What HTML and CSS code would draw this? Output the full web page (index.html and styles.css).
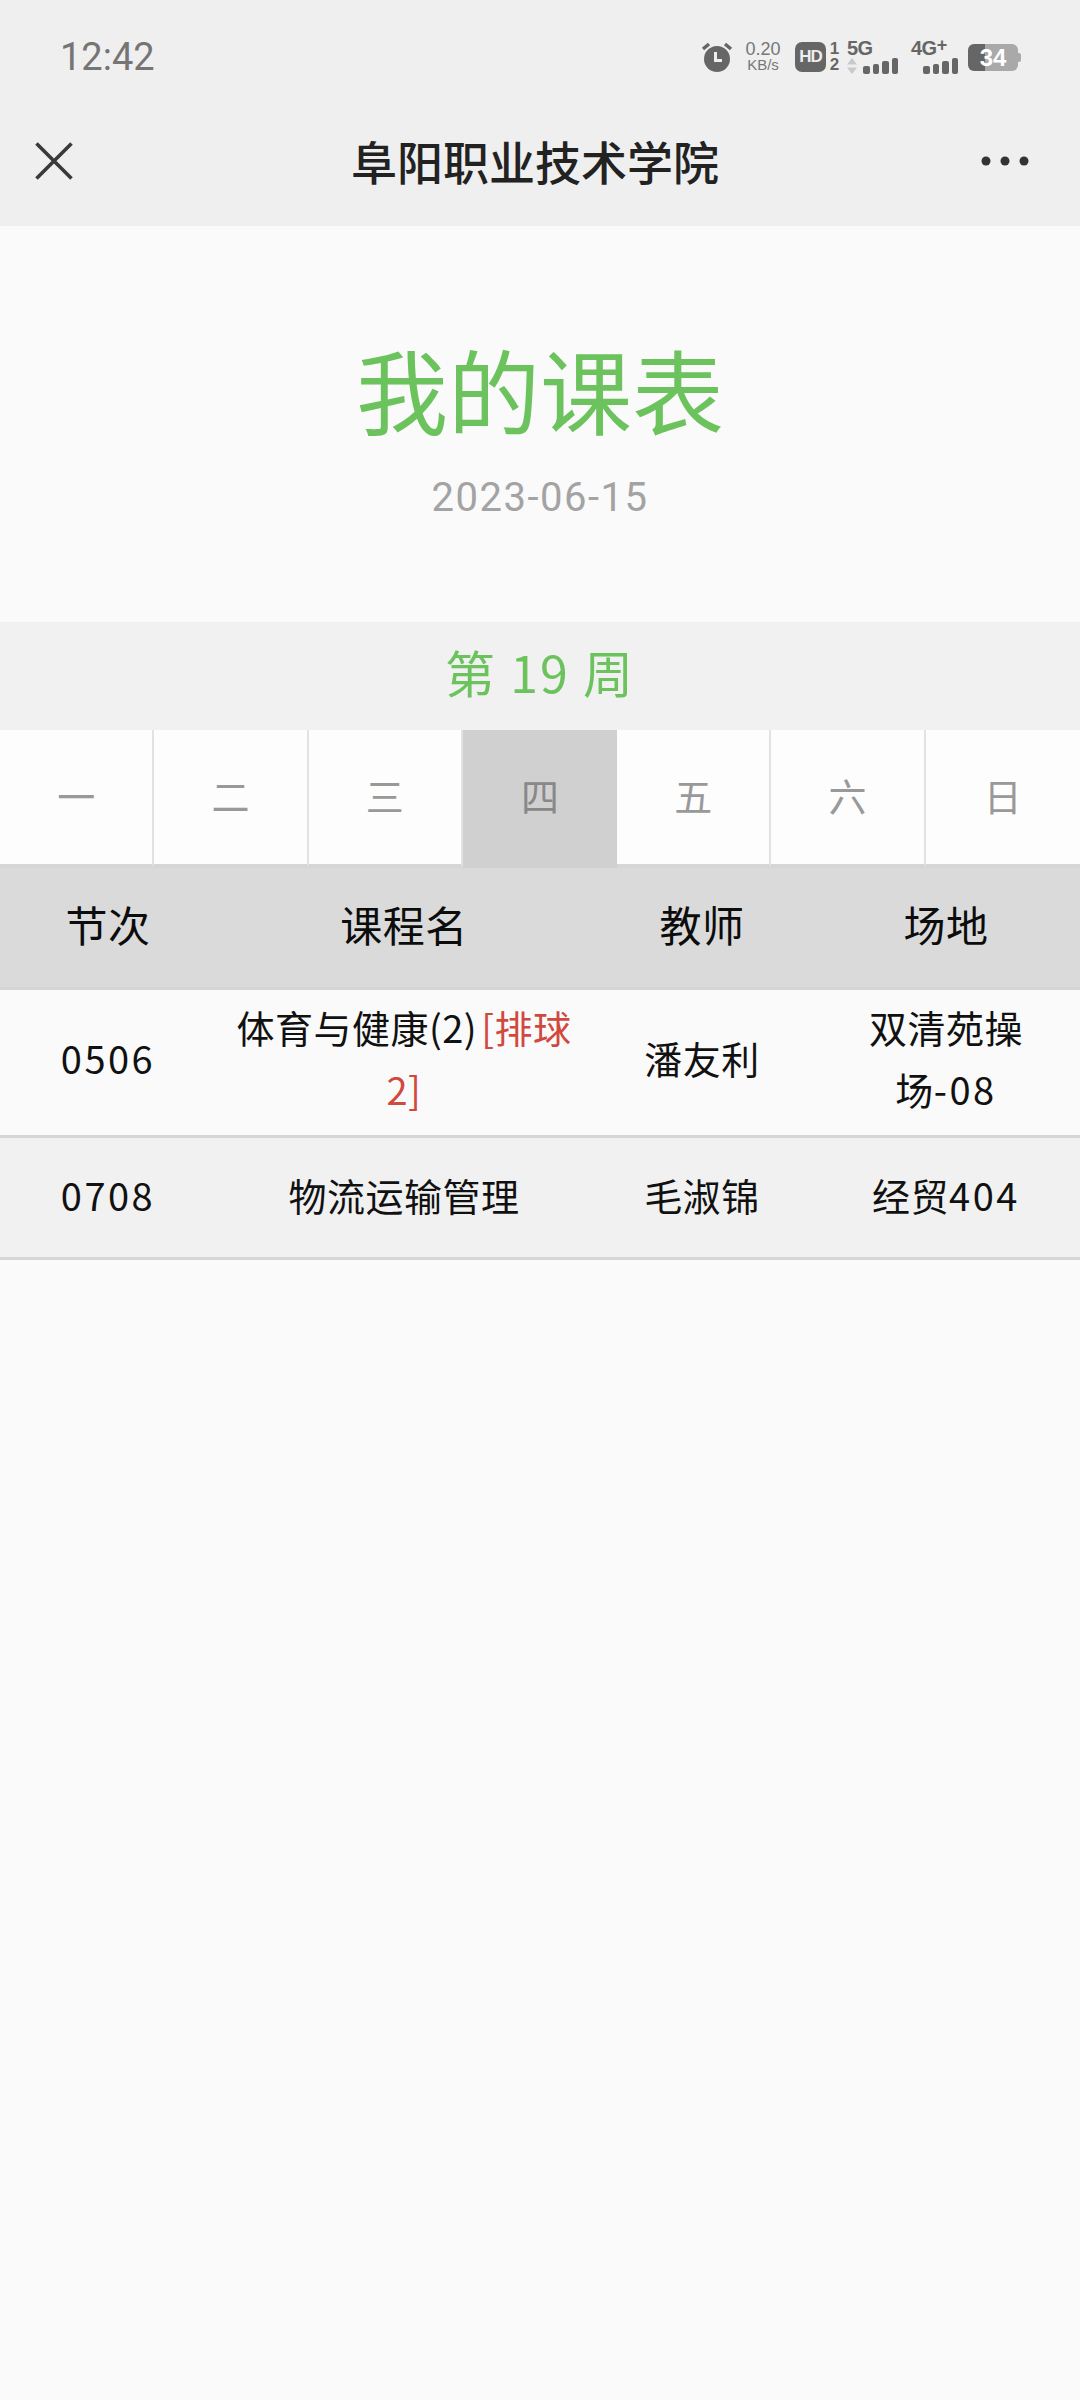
FILE: index.html
```html
<!DOCTYPE html>
<html lang="zh-CN">
<head>
    <meta charset="UTF-8">
    <meta name="viewport" content="width=device-width, initial-scale=1.0">
    <title>我的课表</title>
    <link rel="stylesheet" href="styles.css">
</head>
<body>
    <div class="topbar">
        <div class="status">
            <span class="time">12:42</span>
            <div class="status-icons">
                <svg class="alarm" width="32" height="30" viewBox="0 0 32 30">
                    <circle cx="16" cy="17" r="13" fill="#666"/>
                    <path d="M2 7 L8 2 M30 7 L24 2" stroke="#666" stroke-width="3.5" fill="none"/>
                    <path d="M14.5 10 V18.5 H21" stroke="#eee" stroke-width="3" fill="none"/>
                </svg>
                <div class="speed"><span>0.20</span><span class="speed-unit">KB/s</span></div>
                <span class="hd">HD</span>
                <div class="sim"><span>1</span><span>2</span></div>
                <div class="net net-5g">
                    <span class="net-name">5G</span>
                    <div class="bars">
                        <svg class="updown" width="10" height="16" viewBox="0 0 10 16">
                            <path d="M5 0 L10 6.5 H0 Z M5 16 L10 9.5 H0 Z" fill="#c9c9c9"/>
                        </svg>
                        <i class="bar b1"></i><i class="bar b2"></i><i class="bar b3"></i><i class="bar b4"></i>
                    </div>
                </div>
                <div class="net net-4g">
                    <span class="net-name">4G<sup>+</sup></span>
                    <div class="bars">
                        <i class="bar b1"></i><i class="bar b2"></i><i class="bar b3"></i><i class="bar b4"></i>
                    </div>
                </div>
                <div class="battery"><span>34</span></div>
            </div>
        </div>
        <div class="navbar">
            <svg class="close" width="38" height="38" viewBox="0 0 38 38">
                <path d="M1.5 1.5 L36.5 36.5 M36.5 1.5 L1.5 36.5" stroke="#3a3a3a" stroke-width="3.6" fill="none"/>
            </svg>
            <h1 class="nav-title">阜阳职业技术学院</h1>
            <svg class="more" width="48" height="10" viewBox="0 0 48 10">
                <circle cx="5" cy="5" r="4.5" fill="#333"/>
                <circle cx="24" cy="5" r="4.5" fill="#333"/>
                <circle cx="43" cy="5" r="4.5" fill="#333"/>
            </svg>
        </div>
    </div>

    <div class="hero">
        <div class="hero-title">我的课表</div>
        <div class="hero-date">2023-06-15</div>
    </div>

    <div class="week">第 19 周</div>

    <div class="tabs">
        <div class="tab">一</div>
        <div class="tab">二</div>
        <div class="tab">三</div>
        <div class="tab active">四</div>
        <div class="tab">五</div>
        <div class="tab">六</div>
        <div class="tab">日</div>
    </div>

    <div class="row head">
        <div>节次</div>
        <div>课程名</div>
        <div>教师</div>
        <div>场地</div>
    </div>
    <div class="row first">
        <div class="num">0506</div>
        <div class="course">体育与健康(2)<span class="tag">[排球</span><br><span class="tag">2]</span></div>
        <div>潘友利</div>
        <div class="place">双清苑操<br>场<span class="num">-08</span></div>
    </div>
    <div class="row even">
        <div class="num">0708</div>
        <div class="course">物流运输管理</div>
        <div>毛淑锦</div>
        <div class="place">经贸<span class="num">404</span></div>
    </div>
</body>
</html>
```

FILE: styles.css
```css
* {
    box-sizing: border-box;
}
body {
    margin: 0;
    background-color: #fafafa;
    font-family: "Noto Sans CJK SC", "Noto Sans", sans-serif;
    color: #111;
}

/* top */
.topbar {
    background-color: #efefef;
    height: 226px;
}
.status {
    height: 114px;
    padding: 0 60px;
    display: flex;
    justify-content: space-between;
    align-items: center;
}
.time {
    font-family: Roboto, sans-serif;
    font-size: 38px;
    color: #757575;
}
.status-icons {
    display: flex;
    align-items: center;
    color: #666;
    font-family: "Liberation Sans", sans-serif;
    margin-right: -1px;
}
.alarm {
    margin-right: 11px;
}
.speed {
    display: flex;
    flex-direction: column;
    align-items: center;
    width: 38px;
    margin-right: 13px;
    font-size: 18px;
    line-height: 16px;
    color: #777;
}
.speed-unit {
    font-size: 15px;
}
.hd {
    width: 31px;
    height: 30px;
    border-radius: 7px;
    background-color: #666;
    color: #eee;
    font-size: 17px;
    font-weight: bold;
    line-height: 30px;
    text-align: center;
    letter-spacing: -1px;
}
.sim {
    display: flex;
    flex-direction: column;
    align-items: center;
    width: 13px;
    margin: 0 6px 0 2px;
    font-size: 17px;
    font-weight: bold;
    line-height: 16px;
}
.net {
    display: flex;
    flex-direction: column;
    height: 34px;
}
.net-5g {
    width: 51px;
    margin-right: 13px;
}
.net-4g {
    width: 47px;
    margin-right: 10px;
}
.net-name {
    font-size: 20px;
    font-weight: bold;
    line-height: 17px;
    letter-spacing: -0.5px;
}
.net-name sup {
    font-size: 18px;
    line-height: 0;
    vertical-align: 4px;
}
.bars {
    display: flex;
    justify-content: flex-end;
    align-items: flex-end;
    gap: 3px;
    height: 17px;
}
.updown {
    margin-right: auto;
}
.bar {
    width: 6.5px;
    background-color: #666;
    border-radius: 2px;
}
.b1 { height: 8px; }
.b2 { height: 10px; }
.b3 { height: 13px; }
.b4 { height: 16px; }
.battery {
    position: relative;
    width: 50px;
    height: 27px;
    margin-right: 3px;
    border-radius: 6px;
    background: linear-gradient(to right, #666 0, #666 34%, #a9a9a9 34%);
    color: #fff;
    font-size: 24px;
    font-weight: bold;
    line-height: 27px;
    text-align: center;
}
.battery::after {
    content: "";
    position: absolute;
    right: -3px;
    top: 9px;
    width: 3px;
    height: 9px;
    background-color: #a9a9a9;
    border-radius: 0 2px 2px 0;
}
.navbar {
    height: 112px;
    display: flex;
    justify-content: space-between;
    align-items: center;
    padding: 0 51px 18px 35px;
}
.nav-title {
    margin: 0 0 2px 16px;
    font-size: 46px;
    font-weight: 500;
    color: #222;
}

/* title */
.hero {
    height: 396px;
    padding-top: 107px;
    text-align: center;
}
.hero-title {
    font-size: 92px;
    line-height: 110px;
    color: #6cc35d;
}
.hero-date {
    margin-top: 33px;
    font-family: Roboto, sans-serif;
    font-size: 40px;
    line-height: 44px;
    letter-spacing: 1.5px;
    color: #a3a3a3;
}

.week {
    height: 108px;
    background-color: #f1f1f1;
    color: #6cc35d;
    font-size: 50px;
    line-height: 98px;
    letter-spacing: 2px;
    text-align: center;
}

.tabs {
    display: grid;
    grid-template-columns: repeat(7, 1fr);
    height: 138px;
}
.tab {
    background-color: #fdfdfd;
    border-right: 2px solid #e2e2e2;
    border-bottom: 4px solid #d6d6d6;
    color: #999;
    font-size: 38px;
    line-height: 130px;
    text-align: center;
}
.tab:last-child {
    border-right: 0;
}
.tab.active {
    background-color: #d0d0d0;
    border-right: 0;
    border-bottom-color: #d0d0d0;
    color: #888;
}

/* table */
.row {
    display: grid;
    grid-template-columns: 216px 376px 220px 268px;
    align-items: center;
    min-height: 120px;
    padding-bottom: 6px;
    font-size: 38px;
    line-height: 62px;
    letter-spacing: 0.5px;
    text-align: center;
    border-bottom: 3px solid #d6d6d6;
}
.row.head {
    height: 122px;
    padding-bottom: 7px;
    background-color: #dadada;
    font-size: 42px;
    color: #0c0c0c;
}
.row.first {
    height: 148px;
    padding-bottom: 9px;
}
.row.even {
    height: 122px;
    background-color: #f1f1f1;
}
.num {
    letter-spacing: 2.5px;
}
.tag {
    margin-left: 4px;
    color: #d0493f;
}
.tag + br + .tag {
    margin-left: 0;
}
```
